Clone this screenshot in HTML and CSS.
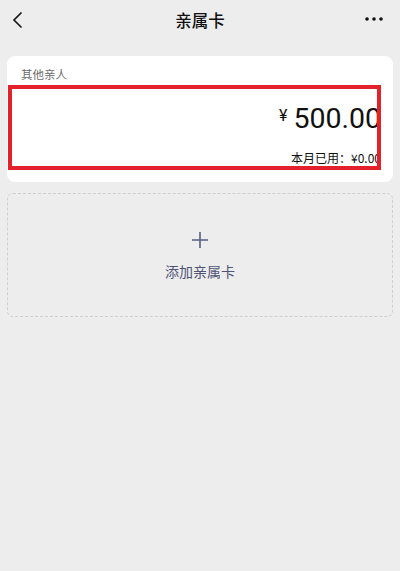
FILE: index.html
```html
<!DOCTYPE html>
<html lang="zh-CN">
<head>
<meta charset="utf-8">
<title>亲属卡</title>
<link rel="stylesheet" href="styles.css">
</head>
<body>
<header class="nav">
  <svg class="nav-back" width="12" height="18" viewBox="0 0 12 18"><path d="M9.5 1.5 L2 9 L9.5 16.5" fill="none" stroke="#111" stroke-width="1.6"/></svg>
  <div class="nav-title">亲属卡</div>
  <svg class="nav-more" width="20" height="6" viewBox="0 0 20 6"><circle cx="3" cy="3" r="1.8" fill="#111"/><circle cx="10" cy="3" r="1.8" fill="#111"/><circle cx="17" cy="3" r="1.8" fill="#111"/></svg>
</header>
<main class="content">
  <section class="card">
    <div class="card-label">其他亲人</div>
    <div class="card-amount"><span class="yen">¥</span><span class="num">500.00</span></div>
    <div class="card-used">本月已用：¥0.00</div>
    <div class="highlight"></div>
  </section>
  <section class="add-card">
    <svg class="add-plus" width="18" height="18" viewBox="0 0 18 18"><path d="M9 1 V17 M1 9 H17" stroke="#5a5e80" stroke-width="1.6" fill="none"/></svg>
    <div class="add-text">添加亲属卡</div>
  </section>
</main>
</body>
</html>
```
FILE: styles.css
```css
html, body {
  margin: 0;
  padding: 0;
}
body {
  background: #ededed;
  font-family: "Noto Sans CJK SC", "Noto Sans", sans-serif;
  width: 400px;
  height: 571px;
  overflow: hidden;
}
.nav {
  height: 40px;
  display: flex;
  align-items: center;
  justify-content: space-between;
  padding: 0 16px 0 12px;
  position: relative;
}
.nav-back {
  display: block;
  margin-top: -1px;
}
.nav-title {
  position: absolute;
  left: 0;
  right: 0;
  text-align: center;
  font-size: 16.5px;
  font-weight: 500;
  color: #111;
  line-height: 40px;
  pointer-events: none;
}
.nav-more {
  display: block;
  margin-top: -2px;
}
.content {
  padding: 16px 7px 0;
}
.card {
  position: relative;
  background: #fff;
  border-radius: 8px;
  padding: 10px 12px 15px 14px;
}
.card-label {
  font-size: 11.5px;
  line-height: 16px;
  color: #6b6b6b;
}
.card-amount {
  margin-top: 20px;
  display: flex;
  justify-content: flex-end;
  align-items: flex-start;
  height: 34px;
  color: #111;
  font-family: "Roboto", "Noto Sans", sans-serif;
}
.yen {
  font-size: 16px;
  line-height: 16px;
  margin-top: 6px;
  margin-right: 6px;
}
.num {
  font-size: 28.5px;
  line-height: 34px;
}
.card-used {
  margin-top: 13px;
  text-align: right;
  font-size: 12px;
  line-height: 18px;
  color: #111;
}
.highlight {
  position: absolute;
  left: 1px;
  top: 29px;
  width: 373px;
  height: 85px;
  box-sizing: border-box;
  border: 4px solid #e2212b;
}
.add-card {
  margin-top: 11px;
  height: 124px;
  box-sizing: border-box;
  border: 1px dashed #cfcfcf;
  border-radius: 6px;
  display: flex;
  flex-direction: column;
  align-items: center;
  justify-content: center;
}
.add-plus {
  display: block;
  margin-top: 1px;
}
.add-text {
  margin-top: 13px;
  font-size: 14px;
  line-height: 18px;
  color: #4f5475;
}
```
